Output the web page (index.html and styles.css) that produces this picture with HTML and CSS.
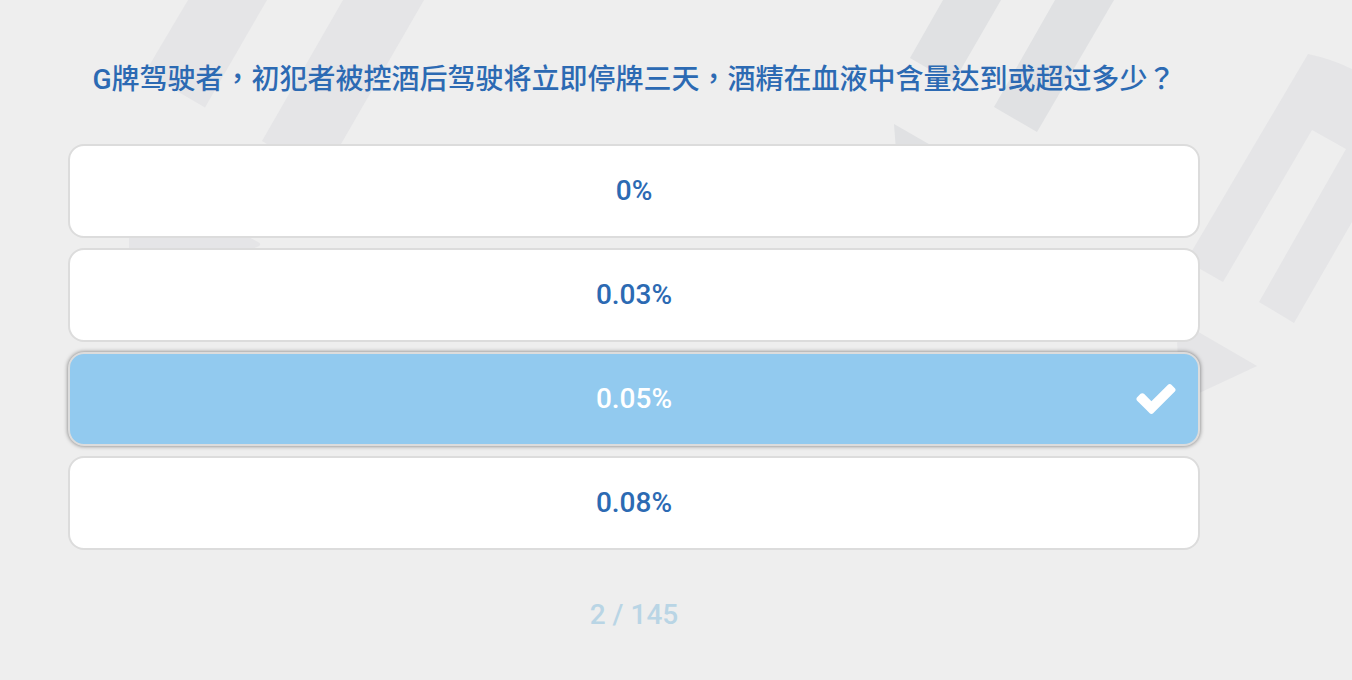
FILE: index.html
```html
<!DOCTYPE html>
<html lang="zh-Hant">
<head>
<meta charset="utf-8">
<meta name="viewport" content="width=device-width, initial-scale=1">
<title>Quiz</title>
<link rel="stylesheet" href="styles.css">
</head>
<body>
<svg class="backdrop" width="1352" height="680" viewBox="0 0 1352 680" aria-hidden="true">
  <g class="tint-violet">
    <path d="M188 0H267L205 107.500L145 72.500Z"/>
    <path d="M343 0H424L322 177L262 141Z"/>
    <path d="M129 230H236L258 242Q263 245 257 247L250 250H129Z"/>
    <path d="M1308 54Q1332 59 1352 69V222L1294 323L1259 302L1346 149L1312 130L1223 282L1186 261Z"/>
    <path d="M1176 319L1257 366L1180 402Z"/>
  </g>
  <g class="tint-slate">
    <path d="M943 0H1001L953 83L910 58Z"/>
    <path d="M1055 0H1114L1037 132L994 107Z"/>
    <path d="M894 124L960 162L899 190Z"/>
  </g>
</svg>
<main class="quiz">
  <h1 class="question">G牌驾驶者，初犯者被控酒后驾驶将立即停牌三天，酒精在血液中含量达到或超过多少？</h1>
  <div class="answers">
    <button class="answer" type="button">0%</button>
    <button class="answer" type="button">0.03%</button>
    <button class="answer answer-selected" type="button" aria-pressed="true">0.05%
      <svg class="check" viewBox="121 334 1550 1188" aria-hidden="true"><path d="M1671 566q0 40-28 68l-724 724-136 136q-28 28-68 28t-68-28l-136-136-362-362q-28-28-28-68t28-68l136-136q28-28 68-28t68 28l294 295 656-657q28-28 68-28t68 28l136 136q28 28 28 68z"/></svg>
    </button>
    <button class="answer" type="button">0.08%</button>
  </div>
  <p class="progress">2 / 145</p>
</main>
</body>
</html>
```
FILE: styles.css
```css
* {
  box-sizing: border-box;
}

body {
  margin: 0;
  min-height: 100vh;
  position: relative;
  overflow-x: hidden;
  background: #eeeeee;
  color: #2c6ab3;
  font-family: Roboto, "Noto Sans CJK TC", sans-serif;
  font-size: 28px;
  font-weight: 500;
  line-height: 36px;
}

.backdrop {
  position: absolute;
  top: 0;
  right: 0;
}

.tint-violet {
  fill: #e5e5e7;
}

.tint-slate {
  fill: #e0e1e3;
}

.quiz {
  position: relative;
  padding: 62px 152px 48px 68px;
}

.question {
  margin: 0 0 46px;
  font-size: inherit;
  font-weight: inherit;
  text-align: center;
}

.answers {
  display: grid;
  gap: 10px;
}

.answer {
  position: relative;
  padding: 27px 64px;
  border: 2px solid #dcdcdc;
  border-radius: 16px;
  background: #ffffff;
  color: inherit;
  font: inherit;
  text-align: center;
}

.answer-selected {
  background: #92caef;
  color: #ffffff;
  box-shadow: 0 0 4px rgba(0, 0, 0, 0.5);
}

.check {
  position: absolute;
  top: 30px;
  right: 22px;
  width: 40px;
  height: 30px;
  fill: #ffffff;
}

.progress {
  margin: 47px 0 0;
  color: #b9d5e5;
  text-align: center;
}
```
